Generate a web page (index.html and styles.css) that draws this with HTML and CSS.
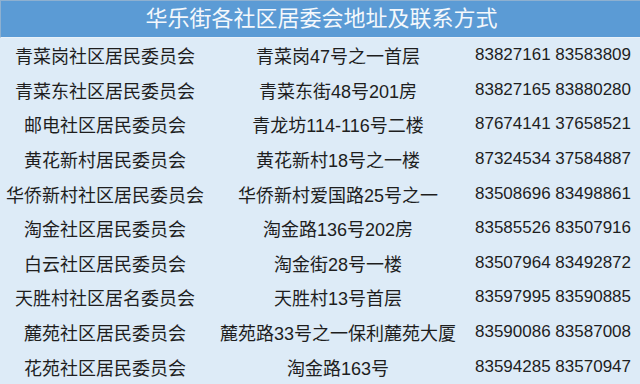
FILE: index.html
```html
<!DOCTYPE html>
<html lang="zh">
<head>
<meta charset="utf-8">
<link rel="stylesheet" href="styles.css">
</head>
<body>
<div class="sheet">
  <div class="title">华乐街各社区居委会地址及联系方式</div>
  <div class="grid">
    <div>青菜岗社区居民委员会</div><div>青菜岗47号之一首层</div><div class="tel">83827161 83583809</div>
    <div>青菜东社区居民委员会</div><div>青菜东街48号201房</div><div class="tel">83827165 83880280</div>
    <div>邮电社区居民委员会</div><div>青龙坊114-116号二楼</div><div class="tel">87674141 37658521</div>
    <div>黄花新村居民委员会</div><div>黄花新村18号之一楼</div><div class="tel">87324534 37584887</div>
    <div>华侨新村社区居民委员会</div><div>华侨新村爱国路25号之一</div><div class="tel">83508696 83498861</div>
    <div>淘金社区居民委员会</div><div>淘金路136号202房</div><div class="tel">83585526 83507916</div>
    <div>白云社区居民委员会</div><div>淘金街28号一楼</div><div class="tel">83507964 83492872</div>
    <div>天胜村社区居名委员会</div><div>天胜村13号首层</div><div class="tel">83597995 83590885</div>
    <div>麓苑社区居民委员会</div><div>麓苑路33号之一保利麓苑大厦</div><div class="tel">83590086 83587008</div>
    <div>花苑社区居民委员会</div><div>淘金路163号</div><div class="tel">83594285 83570947</div>
  </div>
</div>
</body>
</html>
```
FILE: styles.css
```css
html, body {
  margin: 0;
  padding: 0;
  background: #ddebf7;
}
.sheet {
  width: 640px;
  height: 384px;
  overflow: hidden;
  font-family: "Liberation Sans", "Noto Sans CJK SC", sans-serif;
  color: #1e1e1e;
  background: #ddebf7;
}
.title {
  height: 36px;
  line-height: 36px;
  background: #5b9bd5;
  border-top: 1px solid #8eb0d0;
  border-left: 1px solid #8eb0d0;
  border-bottom: 1px solid #e9f1f9;
  color: #f4f8fc;
  font-size: 22px;
  text-align: center;
  padding-left: 2px;
}
.grid {
  display: grid;
  grid-template-columns: 210px 256px 174px;
  grid-auto-rows: 34.6px;
  font-size: 18px;
}
.grid > div {
  display: flex;
  align-items: center;
  justify-content: center;
  white-space: nowrap;
}
.grid > .tel {
  font-size: 17px;
}
```
